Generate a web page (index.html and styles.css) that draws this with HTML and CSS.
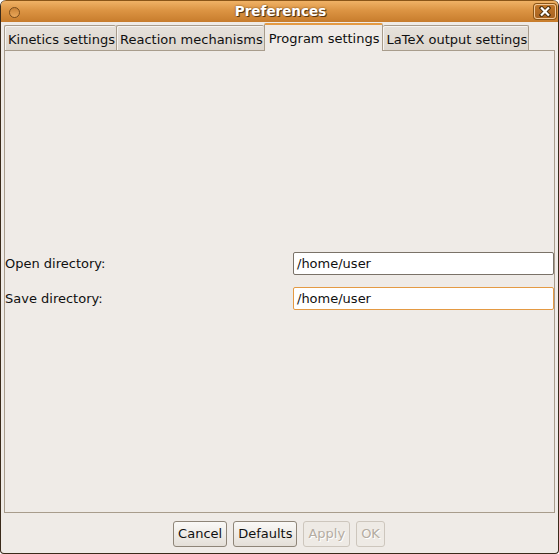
FILE: index.html
```html
<!DOCTYPE html>
<html>
<head>
<meta charset="utf-8">
<link rel="stylesheet" href="styles.css">
</head>
<body>
<div class="window">
  <div class="titlebar">
    <span class="menu-dot"></span>
    <span class="title">Preferences</span>
    <span class="close">
      <svg width="12" height="11" viewBox="0 0 12 11"><path d="M2.5 2 L9.5 9 M9.5 2 L2.5 9" stroke="#4a3010" stroke-width="4" stroke-linecap="square"/><path d="M2.8 2.3 L9.2 8.7 M9.2 2.3 L2.8 8.7" stroke="#ffffff" stroke-width="2.2" stroke-linecap="square"/></svg>
    </span>
  </div>
  <div class="body">
    <div class="tabs">
      <div class="tab">Kinetics settings</div>
      <div class="tab">Reaction mechanisms</div>
      <div class="tab active">Program settings</div>
      <div class="tab">LaTeX output settings</div>
    </div>
    <div class="panel">
      <div class="row">
        <span class="label">Open directory:</span>
        <div class="entry">/home/user</div>
      </div>
      <div class="row">
        <span class="label">Save directory:</span>
        <div class="entry focus">/home/user</div>
      </div>
    </div>
    <div class="buttons">
      <div class="btn">Cancel</div>
      <div class="btn">Defaults</div>
      <div class="btn disabled">Apply</div>
      <div class="btn disabled">OK</div>
    </div>
  </div>
</div>
</body>
</html>
```
FILE: styles.css
```css
html, body {
  margin: 0;
  padding: 0;
  background: #ffffff;
}
body {
  width: 559px;
  height: 554px;
  font-family: "DejaVu Sans", sans-serif;
  font-size: 13px;
  color: #101010;
}
.window {
  width: 559px;
  height: 554px;
  box-sizing: border-box;
  background: #efebe7;
  border: 1px solid #3a2a1a;
  border-top: none;
  border-radius: 6px 6px 4px 4px;
  display: flex;
  flex-direction: column;
  overflow: hidden;
}
.titlebar {
  height: 22px;
  flex: none;
  display: flex;
  align-items: center;
  justify-content: center;
  position: relative;
  background: linear-gradient(#f0b266 0%, #dc9443 45%, #c77c2c 100%);
  border-top: 1px solid #8a5518;
  box-sizing: border-box;
  border-radius: 6px 6px 0 0;
  margin: 0 -1px;
  padding-bottom: 2px;
}
.menu-dot {
  position: absolute;
  left: 9px;
  top: 6px;
  width: 9px;
  height: 9px;
  border-radius: 50%;
  border: 1px solid #7a4d1c;
  background: linear-gradient(#c98236, #e9a75a);
}
.title {
  color: #ffffff;
  font-weight: bold;
  font-size: 13.5px;
  text-shadow: 1px 1px 0 #5a3510, 0 0 2px #6a4010;
  margin-left: 2px;
}
.close {
  position: absolute;
  right: 3px;
  top: 3px;
  width: 22px;
  height: 15px;
  box-sizing: border-box;
  border: 1px solid #f2c99a;
  border-radius: 3px;
  background: linear-gradient(#c07628, #a86220);
  box-shadow: 0 0 0 1px #8a5518;
  display: flex;
  align-items: center;
  justify-content: center;
}
.body {
  flex: 1;
  display: flex;
  flex-direction: column;
  padding: 1px 3px 0 3px;
}
.tabs {
  display: flex;
  align-items: flex-end;
  height: 27px;
  position: relative;
  z-index: 1;
}
.tab {
  height: 25px;
  box-sizing: border-box;
  padding: 0 1px 0 3px;
  line-height: 27px;
  background: linear-gradient(#e6e1db, #ddd7cf);
  border: 1px solid #a89c8c;
  border-bottom: none;
  border-right: none;
  border-radius: 2px 2px 0 0;
  box-shadow: inset 1px 1px 0 #f6f4f1;
  white-space: nowrap;
}
.tab:last-child {
  border-right: 1px solid #a89c8c;
}
.tab.active {
  height: 28px;
  margin-bottom: -1px;
  line-height: 28px;
  background: #efebe7;
  border-top: 2px solid #e49a43;
  box-shadow: none;
  padding: 0 3px 0 4px;
  border-right: 1px solid #a89c8c;
}
.tab.active + .tab {
  border-left: none;
}
.panel {
  height: 463px;
  box-sizing: border-box;
  border: 1px solid #a89c8c;
  display: flex;
  flex-direction: column;
  justify-content: center;
  gap: 12px;
  padding-bottom: 1px;
}
.row {
  display: flex;
  align-items: center;
  justify-content: space-between;
}
.entry {
  width: 261px;
  height: 23px;
  box-sizing: border-box;
  border: 1px solid #7a7268;
  border-radius: 2px;
  background: #ffffff;
  padding-left: 3px;
  line-height: 21px;
}
.entry.focus {
  border-color: #e49a43;
}
.buttons {
  display: flex;
  justify-content: center;
  gap: 6px;
  padding-top: 8px;
  margin-left: -1px;
}
.btn {
  height: 26px;
  box-sizing: border-box;
  padding: 0 4px;
  line-height: 24px;
  border: 1px solid #8e8578;
  border-radius: 3px;
  background: linear-gradient(#faf9f7, #e4dfd8);
}
.btn.disabled {
  color: #b4aca2;
  border-color: #cdc6bd;
  background: #eeeae5;
  text-shadow: 1px 1px 0 #ffffff;
}
```
